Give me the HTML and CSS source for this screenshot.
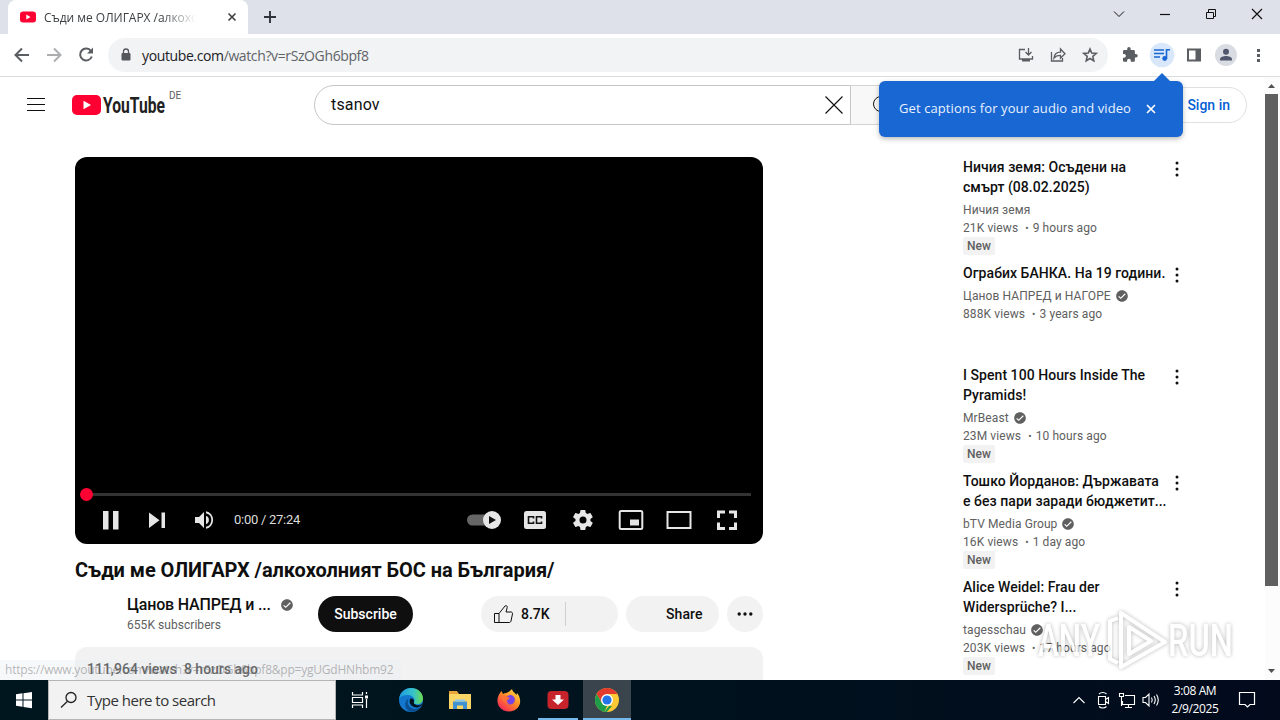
FILE: index.html
```html
<!DOCTYPE html>
<html lang="en">
<head>
    <meta charset="UTF-8">
    <meta name="viewport" content="width=device-width, initial-scale=1.0">
    <title>Съди ме ОЛИГАРХ /алкохолният БОС на България/</title>
    <link rel="stylesheet" href="styles.css">
</head>
<body>
    <svg class="defs" width="0" height="0">
        <symbol id="check" viewBox="0 0 24 24"><path fill="#606060" d="M12 2C6.500 2 2 6.500 2 12s4.500 10 10 10 10-4.500 10-10S17.500 2 12 2zM9.800 17.300l-4.200-4.100L7 11.800l2.800 2.700L17 7.400l1.400 1.400-8.600 8.500z"/></symbol>
        <symbol id="dots" viewBox="0 0 24 24"><path fill="#0f0f0f" d="M12 16.500a1.500 1.500 0 1 1 0 3 1.500 1.500 0 0 1 0-3zM10.500 12a1.500 1.500 0 1 0 3 0 1.500 1.500 0 0 0-3 0zm0-6a1.500 1.500 0 1 0 3 0 1.500 1.500 0 0 0-3 0z"/></symbol>
    </svg>

    <!-- Browser tabs -->
    <div class="tabstrip">
        <div class="tab">
            <svg width="16" height="16" viewBox="0 0 16 16"><rect y="2.500" width="16" height="11" rx="3" fill="#f03"/><path fill="#fff" d="M6.300 5.600v4.800l4.200-2.400z"/></svg>
            <span class="tab-title">Съди ме ОЛИГАРХ /алкохо</span>
            <svg width="16" height="16" viewBox="0 0 16 16"><path stroke="#3c4043" stroke-width="1.600" d="M4.500 4.500l7 7m0-7l-7 7"/></svg>
        </div>
        <svg class="new-tab" width="16" height="16" viewBox="0 0 16 16"><path stroke="#30343a" stroke-width="1.900" d="M8 2v12M2 8h12"/></svg>
        <div class="window-buttons">
            <svg viewBox="0 0 46 28"><path d="M18 11.500l5 5 5-5"/></svg>
            <svg viewBox="0 0 46 28"><path stroke-width="1.200" d="M18 14.500h10"/></svg>
            <svg viewBox="0 0 46 28"><path d="M18.500 12.500h7v6h-7zM20.500 12.500v-3h7v7h-2"/></svg>
            <svg viewBox="0 0 46 28"><path stroke-width="1.200" d="M18 9l10 10m0-10L18 19"/></svg>
        </div>
    </div>

    <!-- Browser toolbar -->
    <div class="toolbar">
        <svg class="tool" viewBox="0 0 32 32"><path class="line" d="M23 16H10m6-6.500L9.500 16l6.500 6.500"/></svg>
        <svg class="tool faded" viewBox="0 0 32 32"><path class="line" d="M9 16h13m-6-6.500l6.500 6.500-6.500 6.500"/></svg>
        <svg class="tool" viewBox="0 0 32 32"><path class="line" d="M21 12a6 6 0 1 0 .8 5.500"/><path fill="#5a5d61" d="M23 8.500v6h-6z"/></svg>
        <div class="omnibox">
            <svg class="lock" width="12" height="14" viewBox="0 0 12 14"><rect x="1.500" y="5" width="9" height="7.500" rx="1" fill="#54585d"/><path fill="none" stroke="#54585d" stroke-width="1.300" d="M3.500 6V3.500a2.500 2.500 0 0 1 5 0V6"/></svg>
            <span class="url">youtube.com<span class="path">/watch?v=rSzOGh6bpf8</span></span>
            <svg class="tool" viewBox="0 0 32 32"><path class="thin" d="M15 10.500H9.500v9.500h13v-3M18.500 9v7m-3-3l3 3 3-3"/><path fill="#5a5d61" d="M12 20h8v2.500h-8z"/></svg>
            <svg class="tool" viewBox="0 0 32 32"><path class="thin" d="M9.500 13v9h11v-3M12 19c.5-4 3-5.800 6.500-5.800V10l4.500 4.800-4.500 4.500v-3C15.500 16.300 13.500 17 12 19z"/></svg>
            <svg class="tool" viewBox="0 0 32 32"><path class="thin bold" d="M16 10l1.700 4.100 4.500.4-3.400 2.900 1 4.400-3.800-2.300-3.800 2.300 1-4.400-3.400-2.900 4.500-.4z"/></svg>
        </div>
        <div class="extensions">
            <svg class="tool" viewBox="0 0 32 32"><path fill="#5a5d61" transform="translate(7.600 7.400) scale(.7)" d="M20.500 11H19V7c0-1.100-.9-2-2-2h-4V3.500a2.500 2.500 0 0 0-5 0V5H4c-1.100 0-2 .9-2 2v3.800h1.500a2.700 2.700 0 0 1 0 5.400H2V20c0 1.100.9 2 2 2h3.800v-1.500a2.700 2.700 0 0 1 5.400 0V22H17c1.100 0 2-.9 2-2v-4h1.500a2.500 2.500 0 0 0 0-5z"/></svg>
            <svg class="tool" viewBox="0 0 32 32"><circle cx="16" cy="16" r="12.300" fill="#d9e7fa"/><path fill="none" stroke="#1967d2" stroke-width="1.600" d="M8 11h10M8 14.500h10M8 18h6M20.500 20v-9.200H24"/><circle cx="18.700" cy="19.500" r="2.400" fill="#1967d2"/></svg>
            <svg class="tool" viewBox="0 0 32 32"><path fill="#5a5d61" fill-rule="evenodd" d="M9 9.500h14v13H9zM11 11.500v9h6.500v-9z"/></svg>
            <svg class="tool" viewBox="0 0 32 32"><circle cx="16" cy="16" r="11" fill="#dadce4"/><circle cx="16" cy="12.800" r="3" fill="#50566b"/><path fill="#50566b" d="M10 21.500v-1.300c0-2.200 3.500-3.200 6-3.200s6 1 6 3.200v1.300z"/></svg>
            <svg class="tool" viewBox="0 0 32 32"><path fill="#5a5d61" d="M15 10h3v3h-3zm0 5h3v3h-3zm0 5h3v3h-3z"/></svg>
        </div>
    </div>

    <!-- YouTube page -->
    <div class="page">
        <div class="content">
            <div class="masthead">
                <svg class="menu" width="18" height="14" viewBox="0 0 18 14"><path stroke="#0f0f0f" d="M0 .5h18M0 6.500h18M0 12.500h18"/></svg>
                <svg class="logo" width="94" height="24" viewBox="0 0 94 24">
                    <rect y="2" width="29" height="20" rx="5" fill="#f03"/>
                    <path fill="#fff" d="M11.500 7.800v8.400l7.500-4.200z"/>
                    <text x="31" y="20.300" textLength="62" lengthAdjust="spacingAndGlyphs">YouTube</text>
                </svg>
                <span class="country">DE</span>
                <div class="search">
                    <div class="search-box"><span>tsanov</span>
                        <svg width="20" height="20" viewBox="0 0 20 20"><path stroke="#0f0f0f" stroke-width="1.100" d="M1.500 1.500l17 17m0-17l-17 17"/></svg>
                    </div>
                    <div class="search-button"><svg width="24" height="24" viewBox="0 0 24 24"><circle cx="9" cy="11" r="7.500" fill="none" stroke="#0f0f0f"/></svg></div>
                </div>
                <div class="sign-in">Sign in</div>
            </div>

            <div class="columns">
                <div class="primary">
                    <div class="player">
                        <div class="progress"><span class="scrubber"></span></div>
                        <div class="controls">
                            <svg viewBox="0 0 48 48"><path d="M16 15h5.500v18.500H16zm10 0h5.500v18.500H26z"/></svg>
                            <svg class="next" viewBox="0 0 46 48"><path d="M14 16.500v15.500l10.500-7.700zM26.500 16.500H30V32h-3.500z"/></svg>
                            <svg viewBox="0 0 48 48"><path d="M14 21v6h4l5 5V16l-5 5zM25 19.800v8.400a4.500 4.500 0 0 0 0-8.400zM25 15.200v2a7 7 0 0 1 0 13.600v2a9 9 0 0 0 0-17.600z"/></svg>
                            <span class="time">0:00 / 27:24</span>
                            <svg viewBox="0 0 48 48"><rect x="4" y="18.500" width="28" height="11" rx="5.500" fill="#666"/><circle cx="29" cy="24" r="9"/><path fill="#111" d="M26 20v8l7-4z"/></svg>
                            <svg viewBox="0 0 48 48"><rect x="13" y="15" width="22" height="18" rx="2.500"/><path fill="none" stroke="#111" stroke-width="1.600" d="M22.500 22.500v-1.700h-5v6.400h5v-1.700m8-3v-1.700h-5v6.400h5v-1.700"/></svg>
                            <svg viewBox="0 0 48 48"><path transform="translate(12 12)" d="M19.400 13c0-.3.100-.6.100-1s0-.7-.1-1l2.100-1.600c.2-.1.200-.4.100-.6l-2-3.500c-.1-.2-.4-.3-.6-.2l-2.500 1c-.5-.4-1.100-.7-1.700-1l-.4-2.600a.5.500 0 0 0-.5-.4h-4a.5.500 0 0 0-.5.400L9 5.100c-.6.300-1.200.6-1.700 1l-2.500-1c-.2-.1-.5 0-.6.200l-2 3.500c-.1.200-.1.500.1.600L4.500 11a8 8 0 0 0 0 2l-2.200 1.600c-.2.100-.2.400-.1.600l2 3.500c.1.200.4.300.6.200l2.500-1c.5.400 1.100.7 1.700 1l.4 2.600c0 .2.200.4.500.4h4c.2 0 .5-.2.500-.4l.4-2.600c.6-.3 1.200-.6 1.700-1l2.500 1c.2.100.5 0 .6-.2l2-3.500c.1-.2.100-.5-.1-.6zM12 15.500a3.500 3.500 0 1 1 0-7 3.500 3.500 0 0 1 0 7z"/></svg>
                            <svg viewBox="0 0 48 48"><rect class="outline" x="12.700" y="15" width="22.600" height="18" rx="1.500"/><path d="M23 23.500h9v6h-9z"/></svg>
                            <svg viewBox="0 0 48 48"><path class="outline" d="M12.500 16h23v16h-23z"/></svg>
                            <svg viewBox="0 0 48 48"><path class="outline wide" d="M22 16h-6.500v6M26 16h6.500v6M22 32.500h-6.500v-6M26 32.500h6.500v-6"/></svg>
                        </div>
                    </div>
                    <h1>Съди ме ОЛИГАРХ /алкохолният БОС на България/</h1>
                    <div class="actions">
                        <div class="owner">
                            <div class="owner-name">Цанов НАПРЕД и ... <svg width="14" height="14"><use href="#check"/></svg></div>
                            <div class="owner-count">655K subscribers</div>
                        </div>
                        <div class="subscribe">Subscribe</div>
                        <div class="pill like">
                            <svg width="24" height="24" viewBox="0 0 24 24"><path fill="none" stroke="#0f0f0f" d="M8 20.500H3.500v-9H8m0 9v-9l6-7.500c1.200-1 2.600.2 2.200 1.600L15 10h5c1 0 1.700.8 1.500 1.800L20 19c-.2.900-.8 1.500-1.700 1.500z"/></svg>
                            <span>8.7K</span>
                        </div>
                        <div class="pill dislike"></div>
                        <div class="pill share">Share</div>
                        <div class="pill more"><svg width="24" height="24" viewBox="0 0 24 24"><path fill="#0f0f0f" d="M4.500 12a1.700 1.700 0 1 0 3.400 0 1.700 1.700 0 0 0-3.400 0zm5.800 0a1.700 1.700 0 1 0 3.400 0 1.700 1.700 0 0 0-3.400 0zm5.800 0a1.700 1.700 0 1 0 3.400 0 1.700 1.700 0 0 0-3.400 0z"/></svg></div>
                    </div>
                    <div class="description">111,964 views&nbsp; 8 hours ago</div>
                </div>

                <div class="secondary">
                    <div class="video">
                        <div class="details">
                            <h3>Ничия земя: Осъдени на<br>смърт (08.02.2025)</h3>
                            <div class="meta">Ничия земя</div>
                            <div class="meta">21K views<i>•</i>9 hours ago</div>
                            <div class="badge">New</div>
                        </div>
                        <svg width="24" height="24"><use href="#dots"/></svg>
                    </div>
                    <div class="video">
                        <div class="details">
                            <h3>Ограбих БАНКА. На 19 години.</h3>
                            <div class="meta">Цанов НАПРЕД и НАГОРЕ <svg width="14" height="14"><use href="#check"/></svg></div>
                            <div class="meta">888K views<i>•</i>3 years ago</div>
                        </div>
                        <svg width="24" height="24"><use href="#dots"/></svg>
                    </div>
                    <div class="video">
                        <div class="details">
                            <h3>I Spent 100 Hours Inside The<br>Pyramids!</h3>
                            <div class="meta">MrBeast <svg width="14" height="14"><use href="#check"/></svg></div>
                            <div class="meta">23M views<i>•</i>10 hours ago</div>
                            <div class="badge">New</div>
                        </div>
                        <svg width="24" height="24"><use href="#dots"/></svg>
                    </div>
                    <div class="video">
                        <div class="details">
                            <h3>Тошко Йорданов: Държавата<br>е без пари заради бюджетит...</h3>
                            <div class="meta">bTV Media Group <svg width="14" height="14"><use href="#check"/></svg></div>
                            <div class="meta">16K views<i>•</i>1 day ago</div>
                            <div class="badge">New</div>
                        </div>
                        <svg width="24" height="24"><use href="#dots"/></svg>
                    </div>
                    <div class="video">
                        <div class="details">
                            <h3>Alice Weidel: Frau der<br>Widersprüche? I...</h3>
                            <div class="meta">tagesschau <svg width="14" height="14"><use href="#check"/></svg></div>
                            <div class="meta">203K views<i>•</i>17 hours ago</div>
                            <div class="badge">New</div>
                        </div>
                        <svg width="24" height="24"><use href="#dots"/></svg>
                    </div>
                </div>
            </div>
        </div>
        <div class="scrollbar">
            <svg width="15" height="17" viewBox="0 0 15 17"><path fill="#505050" d="M3 11l3.500-4 3.500 4z"/></svg>
            <div class="thumb"></div>
            <svg width="15" height="17" viewBox="0 0 15 17"><path fill="#505050" d="M3 6l3.500 4L10 6z"/></svg>
        </div>
        <div class="status">https://www.youtube.com/watch?v=rSzOGh6bpf8&amp;pp=ygUGdHNhbm92</div>
    </div>

    <div class="promo">
        <span>Get captions for your audio and video</span>
        <svg width="10" height="10" viewBox="0 0 10 10"><path stroke="#fff" stroke-width="1.700" d="M1 1l8 8m0-8L1 9"/></svg>
    </div>

    <svg class="watermark" width="200" height="70" viewBox="0 0 200 70">
        <text x="3" y="48" textLength="62" lengthAdjust="spacingAndGlyphs">ANY</text>
        <path d="M83 10l-8 3v38l8 4M86 5v54l44-25zM94 19v27l22-13z"/>
        <text x="133" y="48" textLength="65" lengthAdjust="spacingAndGlyphs">RUN</text>
    </svg>

    <!-- Windows taskbar -->
    <div class="taskbar">
        <svg class="start" width="48" height="40" viewBox="0 0 48 40"><path fill="#fff" d="M16 14.300l6.500-1v6.200H16zM23.500 13.200l8.500-1.300v7.600h-8.500zM16 20.500h6.500v6.200l-6.500-1zM23.500 20.500H32v7.700l-8.500-1.300z"/></svg>
        <div class="task-search">
            <svg width="18" height="18" viewBox="0 0 18 18"><circle cx="11" cy="6.500" r="5" fill="none" stroke="#222" stroke-width="1.300"/><path stroke="#222" stroke-width="1.300" d="M7.500 10.200L1 16.500"/></svg>
            Type here to search
        </div>
        <svg class="app" viewBox="0 0 48 40"><path fill="none" stroke="#fff" stroke-width="1.200" d="M16.500 12v3h10v-3M16.500 28v-3h10v3M16.500 17.500h10v5h-10zM30.500 12v2M30.500 19v9"/><path fill="#fff" d="M29 15.500h3v3h-3z"/></svg>
        <div class="apps">
            <div class="app">
                <svg width="24" height="24" viewBox="0 0 24 24">
                    <defs>
                        <linearGradient id="edgeTop" x1="0" x2="1"><stop offset="0" stop-color="#1f9de0"/><stop offset=".6" stop-color="#36c3c9"/><stop offset="1" stop-color="#6fdc4b"/></linearGradient>
                    </defs>
                    <circle cx="12" cy="12" r="12" fill="#1277cd"/>
                    <path fill="url(#edgeTop)" d="M.2 10.500C1.200 4.500 6 0 12 0c7 0 12 5 12 10.500 0 4-3.200 5.800-6 5.800-2.600 0-4-1-3-2.300.5-.8.7-1.200.5-2.200C15 9 12 7 8.500 7 4.500 7 1.500 8.500.2 10.500z"/>
                    <path fill="#0c4f91" d="M9.500 10.500c-2 3.500-.5 10 6 10.500 2.500 0 5-1 7-3-2.500 5.500-8.500 6.500-12 5.200C5 21 5 13.500 9.500 10.500z"/>
                    <path fill="#00131e" d="M11.500 10.500c2.500-.5 4 1.200 3.500 3-.8 1.500.8 3.700 4 3.800 2 0 3.500-.7 4.500-1.500-2 4-6 4.400-9 3-3.500-1.600-5-5.300-3-8.300z"/>
                </svg>
            </div>
            <div class="app">
                <svg width="22" height="20" viewBox="0 0 22 20"><path fill="#e8a33a" d="M0 1h8l2 3h12v4H0z"/><path fill="#fbd667" d="M0 4h22v15H0z"/><path fill="#3f91d2" d="M4 19v-7.500h14V19h-4v-3.500H8V19z"/><path fill="#8cc7ef" d="M6 9.500h10v2H6z"/></svg>
            </div>
            <div class="app">
                <svg width="24" height="24" viewBox="0 0 24 24">
                    <defs><linearGradient id="fox" x1="1" y1="0" x2=".2" y2="1"><stop offset="0" stop-color="#ffe94a"/><stop offset=".5" stop-color="#ff8a24"/><stop offset="1" stop-color="#f5215c"/></linearGradient></defs>
                    <path fill="url(#fox)" d="M3 5l1.500-2 1.500 3c1-.6 2-.9 3.200-1C12 4.500 13 2.500 15 1c.5 3 3 3.500 4.500 6l.5-2c3.500 4 4.500 10 1 14.500C16.500 25 7 25 2.500 19-.8 14.500.3 8.500 3 5z"/>
                    <path fill="#7542e5" d="M8 9c3 0 3-2 6-2 3.500 1 4.500 4 3.500 6.500-1 3-5 4-7.500 2-1.500-1-2-2.500-2-3.500l4-1z"/>
                    <path fill="#ff7139" d="M5 8c2-1 4-.5 5 .5l3 1.500-2.500 2c-1.500 1 0 3 2 3-3 1.500-6-.5-7-3z"/>
                </svg>
            </div>
            <div class="app open">
                <svg width="22" height="20" viewBox="0 0 22 20"><rect x=".5" y="1" width="21" height="18" rx="4" fill="#c7232b"/><path fill="#fff" d="M8.500 5h5v4.500H17L11 15 5 9.500h3.500z"/></svg>
            </div>
            <div class="app open active">
                <svg width="24" height="24" viewBox="0 0 24 24"><circle cx="12" cy="12" r="12" fill="#fcc934"/><path fill="#e33b2e" d="M1.600 6A12 12 0 0 1 22.400 6H12L7 15z"/><path fill="#1e9e4a" d="M1.600 6l5.300 9 5.200 3-2.600 5.800A12 12 0 0 1 1.600 6zM9.500 23.700L14 18h3l-5.200 6z"/><circle cx="12" cy="12" r="6" fill="#fff"/><circle cx="12" cy="12" r="4.600" fill="#2475e8"/></svg>
            </div>
        </div>
        <div class="tray">
            <svg viewBox="0 0 24 24"><path d="M6.500 15L12 9.500l5.500 5.500"/></svg>
            <svg viewBox="0 0 24 24"><path d="M7.500 8.500h7v8h-7zM14.500 11.500l3-2v6l-3-2M8 6c2-2 5.500-2 7.500 0M8 18.500c2 2 5.500 2 7.500 0"/></svg>
            <svg viewBox="0 0 24 24"><path d="M10 7.500h9.500v9H7.500V13M13.500 16.500v3M10 19.500h7M4.500 5.500h4v3h-4zM6.500 8.500v9.500"/></svg>
            <svg viewBox="0 0 24 24"><path d="M4 9.500v5h2.500L10 18V6L6.500 9.500zM12.500 9.500q1.500 2.500 0 5M15 8q2.500 4 0 8M17.500 6.500q3.500 5.500 0 11"/></svg>
        </div>
        <div class="clock">3:08 AM<br>2/9/2025</div>
        <svg class="notifications" width="24" height="24" viewBox="0 0 24 24"><path fill="none" stroke="#fff" stroke-width="1.200" d="M4.500 4.500h15v12H15L12.500 19 10 16.500H4.500z"/></svg>
    </div>
</body>
</html>
```

FILE: styles.css
```css
* {
    box-sizing: border-box;
}
body {
    margin: 0;
    width: 1280px;
    height: 720px;
    overflow: hidden;
    position: relative;
    display: flex;
    flex-direction: column;
    background-color: #fff;
    color: #0f0f0f;
    font-family: Roboto, Arial, sans-serif;
}
svg {
    flex: none;
}
.defs {
    position: absolute;
}

/* Browser tabs */
.tabstrip {
    height: 34px;
    flex: none;
    display: flex;
    align-items: center;
    padding-left: 8px;
    background-color: #dee1e9;
    font-family: "Open Sans", sans-serif;
}
.tab {
    width: 240px;
    height: 34px;
    display: flex;
    align-items: center;
    padding: 0 8px 0 12px;
    background-color: #fff;
    border-radius: 8px 8px 0 0;
}
.tab-title {
    width: 152px;
    margin: 0 auto 0 8px;
    white-space: nowrap;
    font-size: 12px;
    letter-spacing: -0.03px;
    color: #3c4043;
    -webkit-mask-image: linear-gradient(to right, #000 118px, transparent 152px);
    mask-image: linear-gradient(to right, #000 118px, transparent 152px);
}
.new-tab {
    margin-left: 14px;
}
.window-buttons {
    margin-left: auto;
    height: 28px;
    align-self: flex-start;
    display: flex;
}
.window-buttons svg {
    width: 46px;
    height: 28px;
    fill: none;
    stroke: #111;
}

/* Browser toolbar */
.toolbar {
    height: 43px;
    flex: none;
    display: flex;
    align-items: center;
    padding: 0 6px;
    border-bottom: 1px solid #dadce0;
    font-family: "Open Sans", sans-serif;
}
.tool {
    width: 32px;
    height: 32px;
}
.tool .line {
    fill: none;
    stroke: #5a5d61;
    stroke-width: 2;
}
.tool .thin {
    fill: none;
    stroke: #5a5d61;
    stroke-width: 1.3;
}
.tool .bold {
    stroke-width: 1.6;
}
.faded {
    opacity: 0.5;
}
.omnibox {
    width: 1000px;
    height: 34px;
    margin-left: 6px;
    padding: 0 2px 0 12px;
    display: flex;
    align-items: center;
    background-color: #f1f3f4;
    border-radius: 17px;
}
.url {
    margin: 0 auto 0 10px;
    font-size: 14px;
    letter-spacing: -0.38px;
    color: #202124;
}
.path {
    color: #5f6368;
}
.extensions {
    display: flex;
    margin-left: 6px;
}

/* Page */
.page {
    height: 603px;
    flex: none;
    display: flex;
    position: relative;
    overflow: hidden;
}
.content {
    width: 1265px;
}
.masthead {
    height: 56px;
    display: flex;
    align-items: center;
    padding: 0 18px 0 27px;
}
.logo {
    margin-left: 27px;
}
.logo text {
    font-size: 22px;
    font-weight: bold;
    fill: #212121;
}
.country {
    width: 20px;
    margin: -19px 0 0 3px;
    font-size: 10px;
    color: #606060;
}
.search {
    display: flex;
    height: 40px;
    margin-left: 125px;
}
.search-box {
    width: 537px;
    display: flex;
    align-items: center;
    justify-content: space-between;
    padding: 0 6px 0 16px;
    border: 1px solid #c6c6c6;
    border-radius: 20px 0 0 20px;
    font-size: 16px;
    letter-spacing: 0.15px;
}
.search-box span {
    padding-bottom: 2px;
}
.search-button {
    width: 64px;
    display: flex;
    align-items: center;
    justify-content: center;
    padding-left: 2px;
    background-color: #f8f8f8;
    border: 1px solid #d3d3d3;
    border-left: none;
    border-radius: 0 20px 20px 0;
}
.sign-in {
    height: 36px;
    margin-left: auto;
    padding: 0 16px 0 40px;
    border: 1px solid #e0e0e0;
    border-radius: 18px;
    line-height: 34px;
    font-size: 14px;
    font-weight: 500;
    color: #065fd4;
}
.columns {
    display: flex;
    padding: 24px 0 0 75px;
}
.primary {
    width: 688px;
    flex: none;
}

/* Video player */
.player {
    height: 387px;
    display: flex;
    flex-direction: column;
    justify-content: flex-end;
    padding: 0 12px;
    background-color: #000;
    border-radius: 12px;
}
.progress {
    height: 3px;
    display: flex;
    align-items: center;
    background-color: #333;
}
.scrubber {
    width: 13px;
    height: 13px;
    margin-left: -7px;
    border-radius: 50%;
    background-color: #f03;
}
.controls {
    height: 48px;
    display: flex;
}
.controls svg {
    width: 48px;
    height: 48px;
    fill: #e6e6e6;
}
.controls .next {
    width: 46px;
}
.controls .outline {
    fill: none;
    stroke: #e6e6e6;
    stroke-width: 2;
}
.controls .wide {
    stroke-width: 3;
}
.time {
    margin: 0 auto 0 5px;
    line-height: 48px;
    font-size: 13px;
    letter-spacing: -0.27px;
    color: #ddd;
}

/* Title and buttons */
h1 {
    margin: 12px 0;
    line-height: 28px;
    font-size: 20px;
    font-weight: 700;
    letter-spacing: -0.05px;
    white-space: nowrap;
}
.actions {
    height: 36px;
    display: flex;
    font-size: 14px;
    font-weight: 500;
}
.owner {
    width: 191px;
    margin-left: 52px;
    margin-top: -2px;
}
.owner-name {
    display: flex;
    align-items: center;
    gap: 9px;
    line-height: 22px;
    font-size: 16px;
    letter-spacing: -0.18px;
    white-space: nowrap;
}
.owner-count {
    line-height: 18px;
    font-size: 12px;
    font-weight: 400;
    letter-spacing: 0.05px;
    color: #606060;
}
.subscribe {
    width: 95px;
    border-radius: 18px;
    background-color: #0f0f0f;
    color: #fff;
    line-height: 36px;
    text-align: center;
}
.pill {
    display: flex;
    align-items: center;
    background-color: #f2f2f2;
    border-radius: 18px;
}
.like {
    width: 85px;
    margin-left: 68px;
    padding-left: 10px;
    gap: 6px;
    border-radius: 18px 0 0 18px;
    background-image: linear-gradient(#d0d0d0, #d0d0d0);
    background-size: 1px 24px;
    background-position: right center;
    background-repeat: no-repeat;
}
.dislike {
    width: 52px;
    border-radius: 0 18px 18px 0;
}
.share {
    width: 93px;
    margin-left: 8px;
    padding-left: 40px;
    letter-spacing: 0.1px;
}
.more {
    width: 36px;
    margin-left: 8px;
    justify-content: center;
}
.description {
    height: 90px;
    margin-top: 15px;
    padding: 12px;
    line-height: 20px;
    font-size: 14px;
    font-weight: 500;
    background-color: #f2f2f2;
    border-radius: 12px;
}

/* Suggested videos */
.secondary {
    margin-left: 200px;
    width: 226px;
}
.video {
    display: flex;
    min-height: 94px;
    margin-bottom: 8px;
}
.details {
    width: 202px;
    white-space: nowrap;
}
h3 {
    margin: 0 0 4px;
    line-height: 20px;
    font-size: 14px;
    font-weight: 500;
    letter-spacing: 0.05px;
}
.meta {
    height: 18px;
    display: flex;
    align-items: center;
    gap: 4px;
    font-size: 12px;
    letter-spacing: 0.1px;
    color: #606060;
}
.meta i {
    margin-left: 3px;
    font-size: 10px;
    font-style: normal;
}
.badge {
    width: 32px;
    height: 18px;
    line-height: 18px;
    text-align: center;
    font-size: 12px;
    font-weight: 500;
    color: #606060;
    background-color: #f2f2f2;
    border-radius: 2px;
}

.scrollbar {
    width: 15px;
    height: 603px;
    display: flex;
    flex-direction: column;
    justify-content: space-between;
    background-color: #fcfcfc;
}
.thumb {
    width: 13px;
    height: 492px;
    margin-bottom: auto;
    background-color: #606060;
}
.status {
    position: absolute;
    left: 0;
    bottom: 0;
    width: 401px;
    height: 20px;
    padding-left: 5px;
    background-color: rgba(236, 237, 239, 0.4);
    font-family: "Open Sans", sans-serif;
    font-size: 12px;
    letter-spacing: -0.22px;
    line-height: 20px;
    white-space: nowrap;
    color: rgba(95, 99, 104, 0.45);
}

/* Captions tip over the toolbar */
.promo {
    position: absolute;
    left: 879px;
    top: 81px;
    width: 304px;
    height: 56px;
    display: flex;
    align-items: center;
    gap: 15px;
    padding: 0 20px 1px;
    border-radius: 6px;
    background-color: #1967d2;
    box-shadow: 0 2px 5px rgba(60, 64, 67, 0.35);
    font-family: "Open Sans", sans-serif;
    font-size: 13px;
    letter-spacing: 0.1px;
    white-space: nowrap;
    color: #e8f1ff;
}
.promo span {
    padding-bottom: 2px;
}
.promo::before {
    content: "";
    position: absolute;
    left: 275px;
    top: -8px;
    border: 8px solid transparent;
    border-top: none;
    border-bottom-color: #1967d2;
}
.watermark {
    position: absolute;
    left: 1035px;
    top: 608px;
    opacity: 0.7;
    filter: drop-shadow(0 0 2px rgba(0, 0, 0, 0.4));
}
.watermark text {
    font-size: 44px;
    font-weight: 500;
    fill: #fff;
}
.watermark path {
    fill: none;
    stroke: #fff;
    stroke-width: 4;
    stroke-linejoin: round;
}

/* Taskbar */
.taskbar {
    height: 40px;
    flex: none;
    display: flex;
    align-items: center;
    background: linear-gradient(to right, #00161f, #00131e 50%, #020a1c);
    font-family: "Open Sans", sans-serif;
    color: #fff;
}
.task-search {
    width: 288px;
    height: 40px;
    display: flex;
    align-items: center;
    gap: 9px;
    padding-left: 11px;
    background-color: #f2f2f2;
    border: 1px solid #b5b5b5;
    font-size: 15px;
    letter-spacing: -0.5px;
    color: #333;
}
.app {
    width: 48px;
    height: 40px;
    display: flex;
    align-items: center;
    justify-content: center;
}
.apps {
    display: flex;
    gap: 1px;
    margin-left: 3px;
}
.open {
    background: linear-gradient(#76b9ed, #76b9ed) center bottom / 40px 2px no-repeat;
}
.active {
    background-color: #3a444d;
    background-size: 48px 2px;
}
.tray {
    display: flex;
    margin-left: auto;
}
.tray svg {
    width: 24px;
    height: 24px;
    fill: none;
    stroke: #fff;
    stroke-width: 1.1;
}
.clock {
    width: 62px;
    margin-left: 1px;
    padding-bottom: 1px;
    text-align: center;
    font-size: 12px;
    line-height: 18px;
    letter-spacing: -0.4px;
}
.notifications {
    margin: 0 21px 0 9px;
}
```
